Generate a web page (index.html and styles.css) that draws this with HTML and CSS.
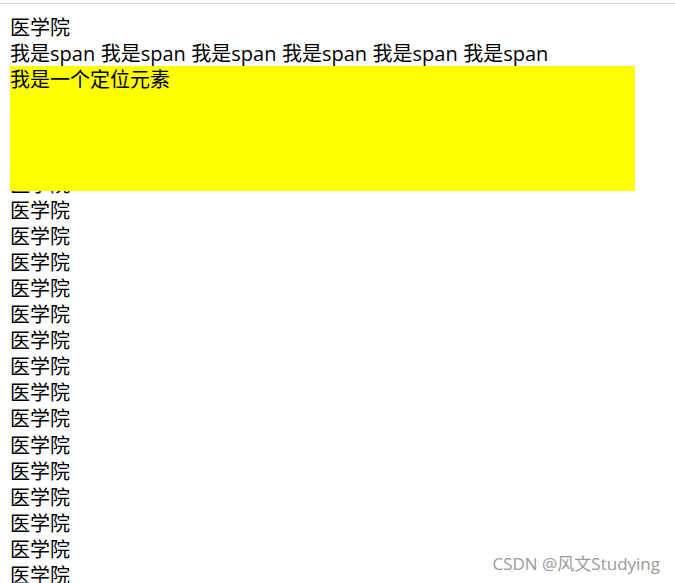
FILE: index.html
```html
<!DOCTYPE html>
<html lang="zh-CN">
<head>
<meta charset="utf-8">
<title>定位</title>
<link rel="stylesheet" href="styles.css">
</head>
<body>
<div class="chrome"></div>
<div class="page">
  <div>医学院</div>
  <span class="item">我是span</span> <span class="item">我是span</span> <span class="item">我是span</span> <span class="item">我是span</span> <span class="item">我是span</span> <span class="item">我是span</span>
  <div class="box">我是一个定位元素</div>
  <div>医学院</div>
  <div>医学院</div>
  <div>医学院</div>
  <div>医学院</div>
  <div>医学院</div>
  <div>医学院</div>
  <div>医学院</div>
  <div>医学院</div>
  <div>医学院</div>
  <div>医学院</div>
  <div>医学院</div>
  <div>医学院</div>
  <div>医学院</div>
  <div>医学院</div>
  <div>医学院</div>
  <div>医学院</div>
  <div>医学院</div>
  <div>医学院</div>
  <div>医学院</div>
  <div>医学院</div>
</div>
<div class="watermark">CSDN @风文Studying</div>
</body>
</html>
```
FILE: styles.css
```css
html, body {
  margin: 0;
  padding: 0;
  background: #fff;
  overflow: hidden;
}
body {
  height: 583px;
  font-family: "Noto Sans CJK SC", "Noto Sans", sans-serif;
  font-size: 20px;
  line-height: 26.1px;
  color: #000;
}
.chrome {
  height: 3px;
  border-bottom: 1px solid #dadada;
}
.page {
  padding: 10px;
  word-spacing: 1px;
}
.item {
  font-family: "Open Sans", "Noto Sans CJK SC", sans-serif;
  line-height: 20px;
  word-spacing: 0;
}
.box {
  position: absolute;
  width: 625px;
  height: 125px;
  background: #ffff00;
  word-spacing: 0;
}
.watermark {
  position: absolute;
  right: 15px;
  bottom: 9px;
  font-family: "Open Sans", "Noto Sans CJK SC", sans-serif;
  font-size: 17px;
  line-height: 20px;
  color: #9a9a9a;
  text-shadow: 0 0 1px #fff;
}
```
